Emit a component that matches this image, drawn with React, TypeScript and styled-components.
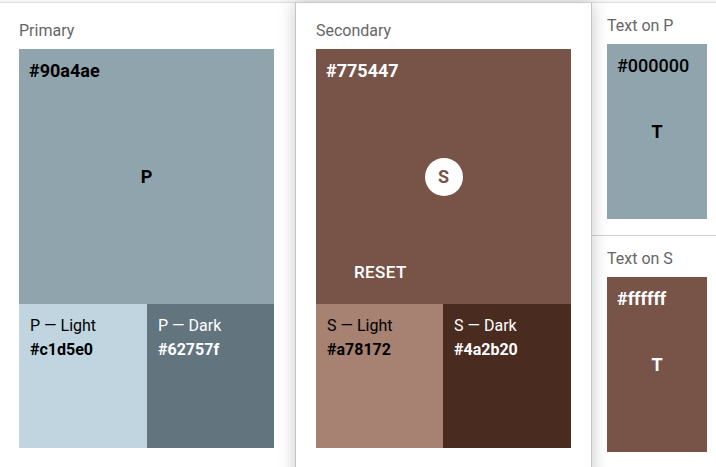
import React from "react";
import styled, { createGlobalStyle } from "styled-components";

const Global = createGlobalStyle`
  html, body { margin: 0; padding: 0; background: #ffffff; }
  body { font-family: Roboto, "Noto Sans", "Liberation Sans", sans-serif; overflow: hidden; }
  * { box-sizing: border-box; }
`;

const Page = styled.div`
  width: 716px;
  height: 467px;
  overflow: hidden;
  display: flex;
  flex-direction: column;
`;

const TopRule = styled.div`
  height: 3px;
  flex: none;
  background: #f4f4f4;
  border-bottom: 1px solid #dedede;
`;

const Row = styled.div`
  display: flex;
  flex: 1;
  align-items: flex-start;
`;

const Panel = styled.section`
  width: 295px;
  flex: none;
  padding: 18px 21px 0 19px;
  display: flex;
  flex-direction: column;
  gap: 8px;
`;

const Card = styled.section`
  width: 297px;
  height: 480px;
  flex: none;
  padding: 18px 20px 0 20px;
  display: flex;
  flex-direction: column;
  gap: 8px;
  background: #ffffff;
  border-left: 1px solid #c4c4c4;
  border-right: 1px solid #c4c4c4;
  box-shadow: 0 0 16px rgba(0, 0, 0, 0.22);
  position: relative;
  z-index: 2;
`;

const Title = styled.div`
  font-size: 16px;
  line-height: 20px;
  color: #666666;
`;

const Palette = styled.div`
  display: flex;
  flex-direction: column;
  width: 255px;
`;

const MainSwatch = styled.div<{ $bg: string; $fg: string }>`
  position: relative;
  height: 255px;
  padding: 12px 10px;
  background: ${(p) => p.$bg};
  color: ${(p) => p.$fg};
`;

const Hex = styled.div<{ $weight?: number }>`
  font-size: 18px;
  line-height: 20px;
  font-weight: ${(p) => p.$weight ?? 700};
`;

const Center = styled.div`
  position: absolute;
  inset: 0;
  display: flex;
  align-items: center;
  justify-content: center;
  font-size: 18px;
  font-weight: 700;
`;

const Badge = styled.div<{ $fg: string }>`
  width: 38px;
  height: 38px;
  border-radius: 50%;
  background: #ffffff;
  color: ${(p) => p.$fg};
  display: flex;
  align-items: center;
  justify-content: center;
  font-size: 18px;
  font-weight: 700;
`;

const ResetButton = styled.button`
  position: absolute;
  left: 38px;
  bottom: 22px;
  padding: 0;
  border: none;
  background: transparent;
  color: #ffffff;
  font-family: inherit;
  font-size: 17px;
  font-weight: 500;
  letter-spacing: 0.4px;
  line-height: 20px;
  text-transform: uppercase;
`;

const Variants = styled.div<{ $cols: string }>`
  display: grid;
  grid-template-columns: ${(p) => p.$cols};
  height: 144px;
`;

const Variant = styled.div<{ $bg: string; $fg: string }>`
  background: ${(p) => p.$bg};
  color: ${(p) => p.$fg};
  padding: 10px 10px 0 11px;
  display: flex;
  flex-direction: column;
`;

const VariantName = styled.div`
  font-size: 16px;
  line-height: 24px;
`;

const VariantHex = styled.div`
  font-size: 16px;
  line-height: 24px;
  font-weight: 700;
`;

const Side = styled.aside`
  flex: 1;
  display: flex;
  flex-direction: column;
`;

const SideSection = styled.div`
  padding: 13px 0 16px 15px;
  display: flex;
  flex-direction: column;
  gap: 8px;
  & + & {
    border-top: 1px solid #d0d0d0;
  }
`;

const TextSwatch = styled.div<{ $bg: string; $fg: string }>`
  position: relative;
  width: 100px;
  height: 175px;
  padding: 12px 10px;
  background: ${(p) => p.$bg};
  color: ${(p) => p.$fg};
`;

type V = { name: string; hex: string; fg: string };

const PaletteBlock: React.FC<{
  hex: string;
  fg: string;
  letter: string;
  secondary?: boolean;
  cols: string;
  variants: V[];
}> = ({ hex, fg, letter, secondary, cols, variants }) => (
  <Palette>
    <MainSwatch $bg={hex} $fg={fg}>
      <Hex>{hex}</Hex>
      <Center>{secondary ? <Badge $fg={hex}>{letter}</Badge> : letter}</Center>
      {secondary && <ResetButton>Reset</ResetButton>}
    </MainSwatch>
    <Variants $cols={cols}>
      {variants.map((v) => (
        <Variant key={v.name} $bg={v.hex} $fg={v.fg}>
          <VariantName>{v.name}</VariantName>
          <VariantHex>{v.hex}</VariantHex>
        </Variant>
      ))}
    </Variants>
  </Palette>
);

export default function App() {
  return (
    <Page>
      <Global />
      <TopRule />
      <Row>
        <Panel>
          <Title>Primary</Title>
          <PaletteBlock
            hex="#90a4ae"
            fg="#000000"
            letter="P"
            cols="128px 127px"
            variants={[
              { name: "P — Light", hex: "#c1d5e0", fg: "#000000" },
              { name: "P — Dark", hex: "#62757f", fg: "#ffffff" },
            ]}
          />
        </Panel>
        <Card>
          <Title>Secondary</Title>
          <PaletteBlock
            hex="#775447"
            fg="#ffffff"
            letter="S"
            secondary
            cols="127px 128px"
            variants={[
              { name: "S — Light", hex: "#a78172", fg: "#000000" },
              { name: "S — Dark", hex: "#4a2b20", fg: "#ffffff" },
            ]}
          />
        </Card>
        <Side>
          <SideSection>
            <Title>Text on P</Title>
            <TextSwatch $bg="#90a4ae" $fg="#000000">
              <Hex $weight={500}>#000000</Hex>
              <Center>T</Center>
            </TextSwatch>
          </SideSection>
          <SideSection>
            <Title>Text on S</Title>
            <TextSwatch $bg="#775447" $fg="#ffffff">
              <Hex $weight={700}>#ffffff</Hex>
              <Center>T</Center>
            </TextSwatch>
          </SideSection>
        </Side>
      </Row>
    </Page>
  );
}
